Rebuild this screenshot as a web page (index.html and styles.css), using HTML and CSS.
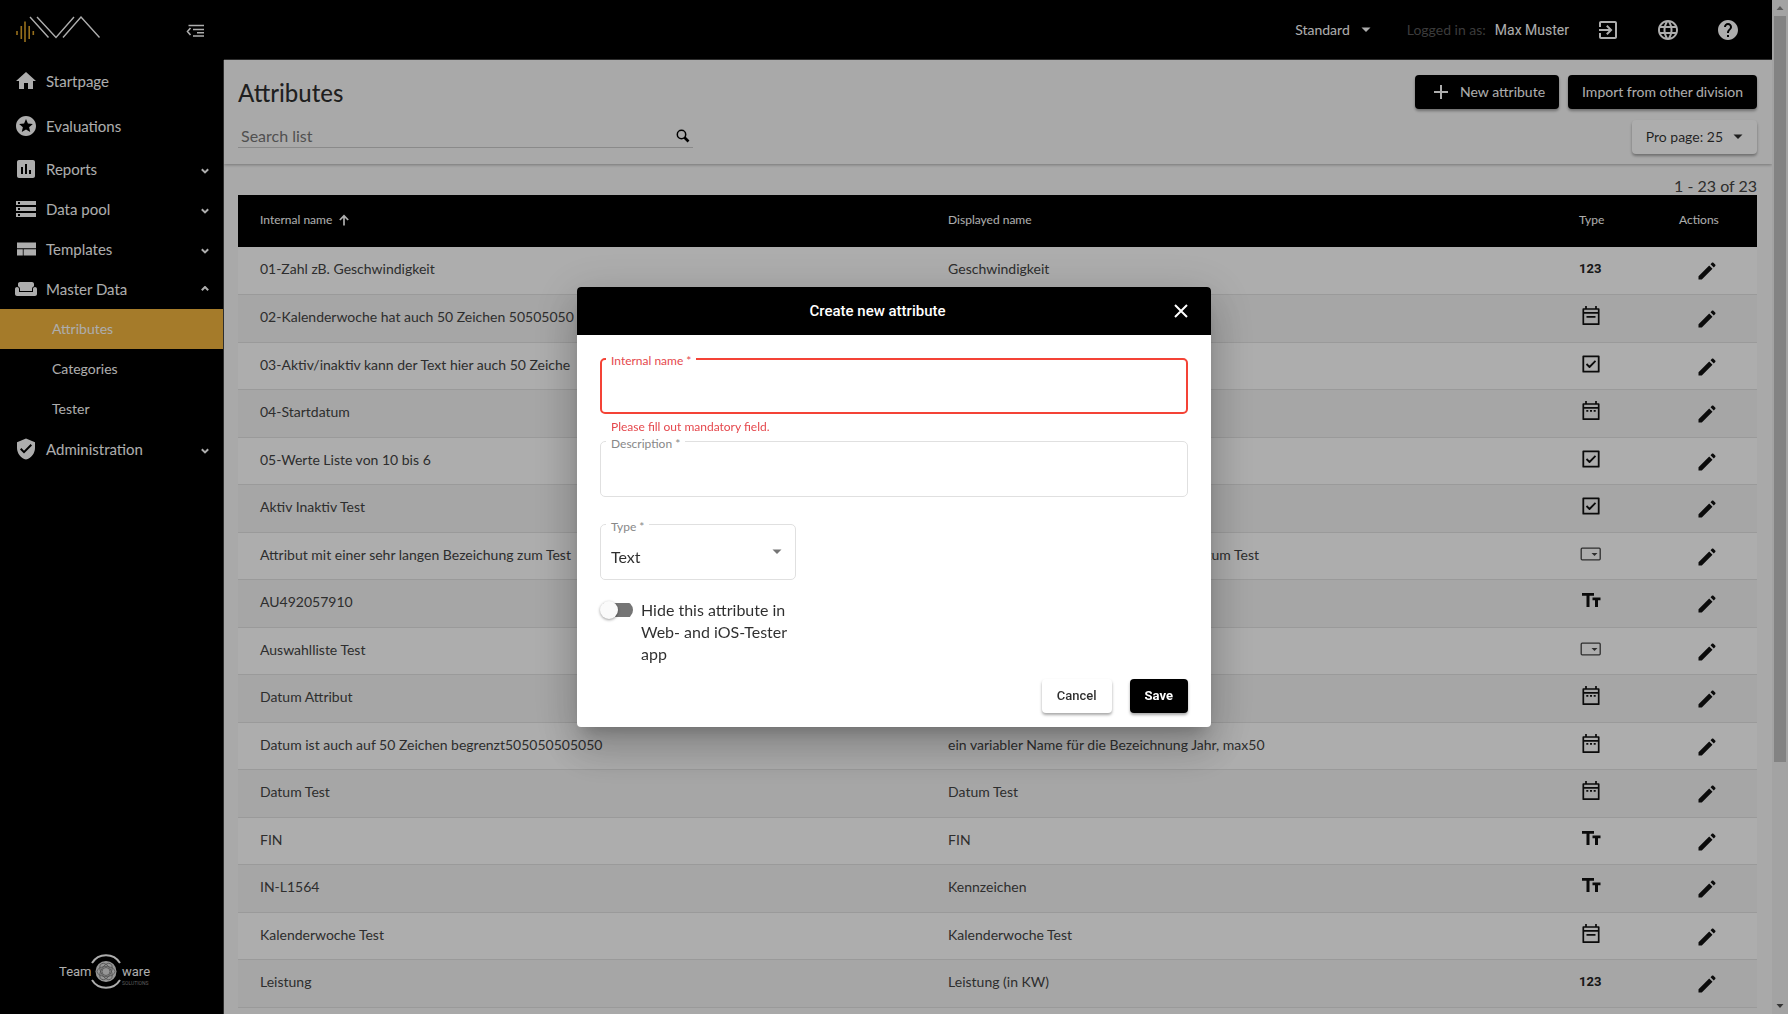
FILE: index.html
```html
<!DOCTYPE html>
<html lang="en">
<head>
<meta charset="utf-8">
<meta name="viewport" content="width=device-width, initial-scale=1">
<title>Attributes</title>
<link rel="stylesheet" href="styles.css">
</head>
<body>
<svg class="sprite" aria-hidden="true">
  <symbol id="home" viewBox="0 0 24 24"><path d="M10 20v-6h4v6h5v-8h3L12 3 2 12h3v8z"/></symbol>
  <symbol id="stars" viewBox="0 0 24 24"><path d="M11.99 2C6.47 2 2 6.48 2 12s4.47 10 9.99 10C17.52 22 22 17.52 22 12S17.52 2 11.99 2zm4.24 16L12 15.45 7.77 18l1.12-4.81-3.73-3.23 4.92-.42L12 5l1.92 4.53 4.92.42-3.73 3.23L16.23 18z"/></symbol>
  <symbol id="chart" viewBox="0 0 24 24"><path d="M19 3H5c-1.1 0-2 .9-2 2v14c0 1.1.9 2 2 2h14c1.1 0 2-.9 2-2V5c0-1.1-.9-2-2-2zM9 17H7v-7h2v7zm4 0h-2V7h2v10zm4 0h-2v-4h2v4z"/></symbol>
  <symbol id="storage" viewBox="0 0 24 24"><path d="M2 20h20v-4H2v4zm2-3h2v2H4v-2zM2 4v4h20V4H2zm4 3H4V5h2v2zm-4 7h20v-4H2v4zm2-3h2v2H4v-2z"/></symbol>
  <symbol id="layout" viewBox="0 0 24 24"><path d="M3 5.5h19v5.7H3zM3 12.2h5.800v6.300H3zM9.600 12.200H22v6.300H9.600z"/></symbol>
  <symbol id="sofa" viewBox="0 0 24 24"><path d="M21 10c-1.1 0-2 .9-2 2v3H5v-3c0-1.1-.9-2-2-2s-2 .9-2 2v5c0 1.1.9 2 2 2h18c1.1 0 2-.9 2-2v-5c0-1.1-.9-2-2-2zm-3-5H6c-1.1 0-2 .9-2 2v2.15c1.16.41 2 1.51 2 2.82V14h12v-2.03c0-1.3.84-2.4 2-2.82V7c0-1.1-.9-2-2-2z"/></symbol>
  <symbol id="shield" viewBox="0 0 24 24"><path d="M12 1.500 3 5.300v5.700c0 5.300 3.840 10.300 9 11.500 5.160-1.200 9-6.200 9-11.500V5.300zM10 16.500l-4-4 1.410-1.410L10 13.670l6.590-6.590L18 8.500z"/></symbol>
  <symbol id="down" viewBox="0 0 10 10"><path d="M1.800 3.200 5 6.400l3.200-3.200" fill="none" stroke="currentColor" stroke-width="2"/></symbol>
  <symbol id="up" viewBox="0 0 10 10"><path d="M1.800 4.200 5 1l3.200 3.200" fill="none" stroke="currentColor" stroke-width="2"/></symbol>
  <symbol id="caret" viewBox="0 0 10 10"><path d="M.5 2.500h9L5 7z"/></symbol>
  <symbol id="collapse" viewBox="0 0 18 14"><path d="M2.500 1.500H18M7 5.500h11M11 8.800h7M7 12h11M4.500 4 1.500 7.500l3 3.500" fill="none" stroke="currentColor" stroke-width="1.600"/></symbol>
  <symbol id="exit" viewBox="0 0 24 24"><path d="M10.09 15.59L11.5 17l5-5-5-5-1.41 1.41L12.67 11H3v2h9.67l-2.58 2.59zM19 3H5c-1.110 0-2 .9-2 2v4h2V5h14v14H5v-4H3v4c0 1.100.89 2 2 2h14c1.100 0 2-.9 2-2V5c0-1.100-.9-2-2-2z"/></symbol>
  <symbol id="globe" viewBox="0 0 24 24"><path d="M11.99 2C6.47 2 2 6.48 2 12s4.47 10 9.99 10C17.52 22 22 17.52 22 12S17.52 2 11.99 2zm6.93 6h-2.95c-.32-1.25-.78-2.45-1.38-3.56 1.84.63 3.37 1.91 4.33 3.56zM12 4.04c.83 1.2 1.48 2.53 1.91 3.96h-3.82c.43-1.43 1.08-2.76 1.91-3.96zM4.26 14C4.1 13.36 4 12.69 4 12s.1-1.36.26-2h3.38c-.08.66-.14 1.32-.14 2 0 .68.06 1.34.14 2H4.26zm.82 2h2.95c.32 1.25.78 2.45 1.38 3.56-1.84-.63-3.37-1.9-4.33-3.56zm2.95-8H5.08c.96-1.66 2.49-2.93 4.33-3.56C8.81 5.55 8.35 6.75 8.03 8zM12 19.96c-.83-1.2-1.48-2.53-1.91-3.96h3.82c-.43 1.43-1.08 2.76-1.91 3.96zM14.34 14H9.66c-.09-.66-.16-1.32-.16-2 0-.68.07-1.35.16-2h4.68c.09.65.16 1.32.16 2 0 .68-.07 1.34-.16 2zm.25 5.56c.6-1.11 1.06-2.31 1.38-3.56h2.95c-.96 1.65-2.49 2.93-4.33 3.56zM16.36 14c.08-.66.14-1.32.14-2 0-.68-.06-1.34-.14-2h3.38c.16.64.26 1.31.26 2s-.1 1.36-.26 2h-3.38z"/></symbol>
  <symbol id="help" viewBox="0 0 24 24"><path d="M12 2C6.48 2 2 6.48 2 12s4.48 10 10 10 10-4.48 10-10S17.52 2 12 2zm1 17h-2v-2h2v2zm2.07-7.75l-.9.92C13.45 12.9 13 13.5 13 15h-2v-.5c0-1.1.45-2.1 1.17-2.83l1.24-1.26c.37-.36.59-.86.59-1.41 0-1.1-.9-2-2-2s-2 .9-2 2H8c0-2.21 1.79-4 4-4s4 1.79 4 4c0 .88-.36 1.68-.93 2.25z"/></symbol>
  <symbol id="plus" viewBox="0 0 24 24"><path d="M19 13h-6v6h-2v-6H5v-2h6V5h2v6h6z"/></symbol>
  <symbol id="search" viewBox="0 0 14 14"><circle cx="5.500" cy="5.500" r="4.200" fill="none" stroke="currentColor" stroke-width="1.500"/><path d="m8.500 8.500 4 4" stroke="currentColor" stroke-width="2.600"/></symbol>
  <symbol id="sort" viewBox="0 0 12 12"><path d="M6 11.500V1.800M1.800 6 6 1.800 10.200 6" fill="none" stroke="currentColor" stroke-width="1.700"/></symbol>
  <symbol id="pencil" viewBox="0 0 24 24"><path d="M3.500 20.500v-3.300L14.200 6.500l3.300 3.300L6.800 20.500zM15.500 5.200l1.400-1.400c.5-.5 1-.5 1.500 0l1.800 1.800c.5.5.5 1 0 1.500l-1.400 1.400z"/></symbol>
  <symbol id="date" viewBox="0 0 24 24"><path d="M4.300 5h15.400v15.200H4.300zM4.300 8.800h15.400M7 2v3M17 2v3" fill="none" stroke="currentColor" stroke-width="1.700" stroke-linejoin="round"/><path d="M7.300 11h2v1.800h-2zM11 11h2v1.800h-2zM14.700 11h2v1.800h-2z"/></symbol>
  <symbol id="week" viewBox="0 0 24 24"><path d="M4.300 5h15.400v15.200H4.300zM4.300 8.800h15.400M7 2v3M17 2v3M7.500 12.800h9" fill="none" stroke="currentColor" stroke-width="1.700" stroke-linejoin="round"/></symbol>
  <symbol id="check" viewBox="0 0 24 24"><path d="M4.300 4.300h15.400v15.400H4.300zM7.500 12l3 3 6-6.200" fill="none" stroke="currentColor" stroke-width="1.800" stroke-linejoin="round"/></symbol>
  <symbol id="list" viewBox="0 0 24 24"><rect x="2.200" y="6.200" width="19" height="11.600" rx="1" fill="none" stroke="currentColor" stroke-width="1.300"/><path d="M12.500 11h6l-3 3z"/></symbol>
  <symbol id="text" viewBox="0 0 24 24"><path d="M3 4v2.800h4.500V18h3V6.800h4.500V4zm18.500 4.500h-8v2.800h2.500V18h3v-6.700h2.500z"/></symbol>
  <symbol id="close" viewBox="0 0 14 14"><path d="m1 1 12 12M13 1 1 13" stroke="currentColor" stroke-width="2"/></symbol>
</svg>

<div class="app">
  <div class="brand">
    <svg class="logo" width="88" height="28" viewBox="0 0 88 28" role="img" aria-label="IVA">
      <g stroke="#e0a62a" stroke-width="1.600"><path d="M3 15v4M7.300 10v13M11 5.500V26M15.200 10v13M19.300 15v4"/></g>
      <path d="m16 1 18.500 20.500M23 1l19 20.500L60 1M49 21.500 67 1l18.500 20.500" fill="none" stroke="#fff" stroke-width="1.400"/>
    </svg>
    <button class="icon-btn" aria-label="Collapse menu"><svg width="18" height="14"><use href="#collapse"/></svg></button>
  </div>

  <header class="topbar">
    <button class="division">Standard <svg width="10" height="10"><use href="#caret"/></svg></button>
    <span class="login"><span class="login-label">Logged in as:</span> <span class="login-name">Max Muster</span></span>
    <nav class="tools" aria-label="Account">
      <button class="icon-btn" aria-label="Log out"><svg width="24" height="24"><use href="#exit"/></svg></button>
      <button class="icon-btn" aria-label="Language"><svg width="24" height="24"><use href="#globe"/></svg></button>
      <button class="icon-btn" aria-label="Help"><svg width="24" height="24"><use href="#help"/></svg></button>
    </nav>
  </header>

  <aside class="sidebar">
    <nav class="menu" aria-label="Main">
      <a class="item tall" href="#"><svg class="glyph"><use href="#home"/></svg>Startpage</a>
      <a class="item tall" href="#"><svg class="glyph"><use href="#stars"/></svg>Evaluations</a>
      <a class="item" href="#"><svg class="glyph"><use href="#chart"/></svg>Reports<svg class="arrow"><use href="#down"/></svg></a>
      <a class="item" href="#"><svg class="glyph"><use href="#storage"/></svg>Data pool<svg class="arrow"><use href="#down"/></svg></a>
      <a class="item" href="#"><svg class="glyph"><use href="#layout"/></svg>Templates<svg class="arrow"><use href="#down"/></svg></a>
      <a class="item" href="#"><svg class="glyph"><use href="#sofa"/></svg>Master Data<svg class="arrow"><use href="#up"/></svg></a>
      <a class="item sub active" href="#">Attributes</a>
      <a class="item sub" href="#">Categories</a>
      <a class="item sub" href="#">Tester</a>
      <a class="item" href="#"><svg class="glyph"><use href="#shield"/></svg>Administration<svg class="arrow"><use href="#down"/></svg></a>
    </nav>
    <svg class="vendor" width="100" height="38" viewBox="0 0 100 38" role="img" aria-label="TeamWare Solutions">
      <g fill="#fff">
        <text x="0" y="23" class="vendor-name">Team</text>
        <text x="63" y="23" class="vendor-name">ware</text>
        <text x="63" y="32" class="vendor-sub">SOLUTIONS</text>
      </g>
      <path d="M33 10a16.500 16.500 0 0 1 28 0M33 27a16.500 16.500 0 0 0 28 0" fill="none" stroke="#fff" stroke-width="2"/>
      <circle cx="47" cy="18.500" r="10.500" fill="#ddd"/>
      <g fill="none" stroke="#777" stroke-width=".8"><ellipse cx="47" cy="18.500" rx="9" ry="5"/><ellipse cx="47" cy="18.500" rx="9" ry="5" transform="rotate(60 47 18.500)"/><ellipse cx="47" cy="18.500" rx="9" ry="5" transform="rotate(120 47 18.500)"/><circle cx="47" cy="18.500" r="4"/></g>
    </svg>
  </aside>

  <main class="content">
    <section class="head">
      <div class="line">
        <h1>Attributes</h1>
        <div class="actions">
          <button class="btn dark"><svg width="24" height="24"><use href="#plus"/></svg>New attribute</button>
          <button class="btn dark">Import from other division</button>
        </div>
      </div>
      <div class="line">
        <div class="search">
          <input type="search" placeholder="Search list" aria-label="Search list">
          <svg width="14" height="14"><use href="#search"/></svg>
        </div>
        <button class="btn light">Pro page: 25 <svg width="10" height="10"><use href="#caret"/></svg></button>
      </div>
    </section>
    <p class="count">1 - 23 of 23</p>
    <table class="list">
      <colgroup><col class="c-name"><col><col class="c-small"><col class="c-small"></colgroup>
      <thead><tr><th>Internal name <svg width="12" height="12"><use href="#sort"/></svg></th><th>Displayed name</th><th>Type</th><th>Actions</th></tr></thead>
      <tbody>
        <tr><td>01-Zahl zB. Geschwindigkeit</td><td>Geschwindigkeit</td><td class="kind"><b>123</b></td><td class="edit"><button aria-label="Edit"><svg><use href="#pencil"/></svg></button></td></tr>
        <tr><td>02-Kalenderwoche hat auch 50 Zeichen 50505050</td><td>Kalenderwoche hat auch 50 Zeichen 5050</td><td class="kind"><svg><use href="#week"/></svg></td><td class="edit"><button aria-label="Edit"><svg><use href="#pencil"/></svg></button></td></tr>
        <tr><td>03-Aktiv/inaktiv kann der Text hier auch 50 Zeiche</td><td>Aktiv/inaktiv</td><td class="kind"><svg><use href="#check"/></svg></td><td class="edit"><button aria-label="Edit"><svg><use href="#pencil"/></svg></button></td></tr>
        <tr><td>04-Startdatum</td><td>Startdatum</td><td class="kind"><svg><use href="#date"/></svg></td><td class="edit"><button aria-label="Edit"><svg><use href="#pencil"/></svg></button></td></tr>
        <tr><td>05-Werte Liste von 10 bis 6</td><td>Werte Liste</td><td class="kind"><svg><use href="#check"/></svg></td><td class="edit"><button aria-label="Edit"><svg><use href="#pencil"/></svg></button></td></tr>
        <tr><td>Aktiv Inaktiv Test</td><td>Aktiv Inaktiv Test</td><td class="kind"><svg><use href="#check"/></svg></td><td class="edit"><button aria-label="Edit"><svg><use href="#pencil"/></svg></button></td></tr>
        <tr><td>Attribut mit einer sehr langen Bezeichung zum Test</td><td>Attribut mit einer sehr langen Bezeichung zum Test</td><td class="kind"><svg class="soft"><use href="#list"/></svg></td><td class="edit"><button aria-label="Edit"><svg><use href="#pencil"/></svg></button></td></tr>
        <tr><td>AU492057910</td><td>AU492057910</td><td class="kind"><svg><use href="#text"/></svg></td><td class="edit"><button aria-label="Edit"><svg><use href="#pencil"/></svg></button></td></tr>
        <tr><td>Auswahlliste Test</td><td>Auswahlliste Test</td><td class="kind"><svg class="soft"><use href="#list"/></svg></td><td class="edit"><button aria-label="Edit"><svg><use href="#pencil"/></svg></button></td></tr>
        <tr><td>Datum Attribut</td><td>Datum Attribut</td><td class="kind"><svg><use href="#date"/></svg></td><td class="edit"><button aria-label="Edit"><svg><use href="#pencil"/></svg></button></td></tr>
        <tr><td>Datum ist auch auf 50 Zeichen begrenzt505050505050</td><td>ein variabler Name für die Bezeichnung Jahr, max50</td><td class="kind"><svg><use href="#date"/></svg></td><td class="edit"><button aria-label="Edit"><svg><use href="#pencil"/></svg></button></td></tr>
        <tr><td>Datum Test</td><td>Datum Test</td><td class="kind"><svg><use href="#date"/></svg></td><td class="edit"><button aria-label="Edit"><svg><use href="#pencil"/></svg></button></td></tr>
        <tr><td>FIN</td><td>FIN</td><td class="kind"><svg><use href="#text"/></svg></td><td class="edit"><button aria-label="Edit"><svg><use href="#pencil"/></svg></button></td></tr>
        <tr><td>IN-L1564</td><td>Kennzeichen</td><td class="kind"><svg><use href="#text"/></svg></td><td class="edit"><button aria-label="Edit"><svg><use href="#pencil"/></svg></button></td></tr>
        <tr><td>Kalenderwoche Test</td><td>Kalenderwoche Test</td><td class="kind"><svg><use href="#week"/></svg></td><td class="edit"><button aria-label="Edit"><svg><use href="#pencil"/></svg></button></td></tr>
        <tr><td>Leistung</td><td>Leistung (in KW)</td><td class="kind"><b>123</b></td><td class="edit"><button aria-label="Edit"><svg><use href="#pencil"/></svg></button></td></tr>
      </tbody>
    </table>
  </main>

  <div class="scrollbar" aria-hidden="true">
    <svg width="10" height="16" viewBox="0 0 10 16"><path d="M1.500 10h7L5 6z" fill="#888"/></svg>
    <div class="track"><div class="thumb"></div></div>
    <svg width="10" height="16" viewBox="0 0 10 16"><path d="M1.500 6h7L5 10z" fill="#505050"/></svg>
  </div>
</div>

<div class="overlay">
  <form class="dialog" role="dialog" aria-labelledby="dialog-title">
    <div class="dialog-head">
      <h2 id="dialog-title">Create new attribute</h2>
      <button type="button" class="icon-btn" aria-label="Close"><svg width="14" height="14"><use href="#close"/></svg></button>
    </div>
    <div class="dialog-body">
      <div class="field invalid">
        <label for="internal">Internal name *</label>
        <input id="internal" type="text" aria-describedby="internal-error">
        <p id="internal-error" class="error">Please fill out mandatory field.</p>
      </div>
      <div class="field">
        <label for="description">Description *</label>
        <input id="description" type="text">
      </div>
      <div class="field narrow">
        <label for="type">Type *</label>
        <select id="type"><option>Text</option></select>
        <svg width="10" height="10"><use href="#caret"/></svg>
      </div>
      <label class="switch"><input type="checkbox"><span>Hide this attribute in Web- and iOS-Tester app</span></label>
      <div class="buttons">
        <button type="button" class="btn cancel">Cancel</button>
        <button type="submit" class="btn dark save">Save</button>
      </div>
    </div>
  </form>
</div>
</body>
</html>
```
FILE: styles.css
```css
* { box-sizing: border-box; }
html, body { height: 100%; }
body {
  margin: 0;
  overflow: hidden;
  background: #fafafa;
  color: rgba(0, 0, 0, .82);
  font: 14px/20px Lato, "Noto Sans", sans-serif;
}
h1, h2, p { margin: 0; }
button, input, select { font: inherit; color: inherit; }
button { border: 0; background: none; padding: 0; cursor: pointer; }
a { color: inherit; text-decoration: none; }
svg { display: block; fill: currentColor; flex: none; }
.sprite { position: absolute; width: 0; height: 0; }

.app {
  display: grid;
  grid-template: 60px minmax(0, 1fr) / 224px minmax(0, 1fr) 16px;
  grid-template-areas: "brand top scroll" "side main scroll";
  height: 100vh;
}

.brand {
  grid-area: brand;
  display: flex;
  justify-content: space-between;
  align-items: flex-start;
  padding: 16px 20px 0 14px;
  background: #000;
  color: #fff;
}
.brand .icon-btn { padding-top: 8px; }
.topbar {
  grid-area: top;
  display: flex;
  justify-content: flex-end;
  align-items: center;
  padding-right: 32px;
  background: #000;
  border-bottom: 1px solid #444;
  color: #fff;
}
.division { display: flex; align-items: center; gap: 11px; }
.login { display: flex; gap: 9px; margin: 0 27px 0 36px; }
.login-label { color: #585858; }
.login-name { font-family: Roboto, sans-serif; }
.tools { display: flex; gap: 36px; }

.sidebar {
  grid-area: side;
  display: flex;
  flex-direction: column;
  justify-content: space-between;
  padding-bottom: 23px;
  background: #000;
  border-right: 1px solid #444;
  color: #fff;
}
.item {
  display: flex;
  align-items: center;
  height: 40px;
  padding: 0 13px 0 14px;
  font-size: 15px;
}
.tall { height: 45px; padding-bottom: 2px; }
.menu { margin-top: -1px; }
.glyph { width: 24px; height: 24px; margin-right: 8px; }
.arrow { width: 10px; height: 10px; margin: 4px 0 0 auto; }
.sub { padding-left: 52px; font-size: 14px; }
.active { background: #f3b53e; }
.vendor { margin-left: 59px; }
.vendor-name { font: 13px Roboto, sans-serif; }
.vendor-sub { font: 5px Roboto, sans-serif; fill: #888; }

.content { grid-area: main; overflow: hidden; }
.head {
  display: grid;
  gap: 11px;
  padding: 15px 15px 10px 14px;
  box-shadow: 0 1px 3px rgba(0, 0, 0, .3);
}
.line { display: flex; justify-content: space-between; align-items: center; height: 34px; }
h1 { padding-top: 2px; font-size: 24px; font-weight: 500; line-height: 32px; }
.actions { display: flex; gap: 9px; }
.btn {
  display: flex;
  align-items: center;
  height: 34px;
  padding: 0 14px;
  border-radius: 4px;
  box-shadow: 0 2px 3px rgba(0, 0, 0, .35);
}
.dark { background: #000; color: #fff; }
.dark svg { margin-right: 7px; }
.light { gap: 10px; background: #fff; }
.search {
  display: flex;
  align-items: center;
  align-self: flex-start;
  width: 455px;
  height: 28px;
  padding: 5px 3px 0;
  border-bottom: 1px solid #ccc;
}
.search input { flex: 1; border: 0; padding: 0; background: none; outline: 0; font-size: 16px; }
.search input::placeholder { color: #777; }
.search svg { color: #000; }
.count { padding: 13px 15px 0 0; text-align: right; font-size: 16px; line-height: 18px; color: #444; }

.list { width: calc(100% - 29px); margin-left: 14px; table-layout: fixed; border-collapse: collapse; }
.c-name { width: 45.3%; }
.c-small { width: 100px; }
th { height: 52px; padding: 0 22px 2px; background: #000; color: #fff; font-size: 12px; font-weight: 400; text-align: left; white-space: nowrap; }
th svg { display: inline-block; margin-left: 3px; vertical-align: -2px; }
td { height: 47px; padding: 0 22px 2px; border-bottom: 1px solid #e4e4e4; white-space: nowrap; color: #444; }
tbody tr { background: #fff; }
tbody tr:nth-child(even) { background: #f5f5f5; }
tbody tr:nth-child(even) td { height: 48px; }
td svg { width: 24px; height: 24px; color: #111; }
td .soft { color: #444; }
td b { font: bold 13px Roboto, sans-serif; color: #222; }
.kind { padding-bottom: 4px; }
.edit { padding: 2px 22px 0 38px; }
.edit button { display: block; }

.scrollbar { grid-area: scroll; display: flex; flex-direction: column; align-items: center; background: #f1f1f1; }
.track { flex: 1; align-self: stretch; padding: 0 2px; }
.thumb { height: 76%; background: #c1c1c1; }

.overlay {
  position: fixed;
  inset: 0;
  display: flex;
  align-items: center;
  justify-content: center;
  background: rgba(0, 0, 0, .32);
}
.dialog {
  width: 634px;
  border-radius: 4px;
  overflow: hidden;
  background: #fff;
  box-shadow: 0 11px 15px -7px rgba(0, 0, 0, .2), 0 24px 38px 3px rgba(0, 0, 0, .14), 0 9px 46px 8px rgba(0, 0, 0, .12);
}
.dialog-head {
  display: grid;
  grid-template-columns: 1fr 14px;
  gap: 19px;
  align-items: center;
  height: 48px;
  padding: 0 23px;
  background: #000;
  color: #fff;
}
h2 { font: 500 15px/20px Roboto, sans-serif; text-align: center; }
.dialog-body { display: flex; flex-direction: column; padding: 23px 23px 14px; }
.field { position: relative; height: 56px; margin-bottom: 27px; }
.field input, .field select {
  display: block;
  width: 100%;
  height: 56px;
  padding: 10px 10px 0;
  border: 1px solid #e0e0e0;
  border-radius: 5px;
  outline: 0;
  background: #fff;
  font-size: 16px;
}
.field select { appearance: none; }
.field label {
  position: absolute;
  top: -6px;
  left: 6px;
  padding: 0 5px;
  background: #fff;
  color: #888;
  font-size: 12px;
  line-height: 18px;
}
.field svg { position: absolute; top: 23px; right: 14px; color: #757575; }
.field.invalid input { border: 2px solid #f44336; }
.field.invalid label { color: #e5484d; }
.error { padding: 4px 11px 0; color: #e5484d; font-size: 12px; line-height: 18px; }
.narrow { width: 196px; margin-bottom: 19px; }
.switch { display: flex; gap: 8px; width: 196px; font-size: 16px; line-height: 22px; }
.switch input {
  appearance: none;
  flex: none;
  width: 33px;
  height: 18px;
  margin: 2px 0 0;
  background: linear-gradient(#757575, #757575) 3px 2px / 30px 14px no-repeat;
  border-radius: 9px;
}
.switch input::before {
  content: "";
  display: block;
  width: 18px;
  height: 18px;
  border-radius: 50%;
  background: #fafafa;
  box-shadow: 0 1px 3px rgba(0, 0, 0, .4);
}
.buttons { display: flex; justify-content: flex-end; gap: 18px; margin-top: 14px; }
.cancel, .save { padding: 0 15px; font: 500 13px/20px Roboto, sans-serif; }
.cancel { background: #fff; }
.save { font-weight: 700; }
```
